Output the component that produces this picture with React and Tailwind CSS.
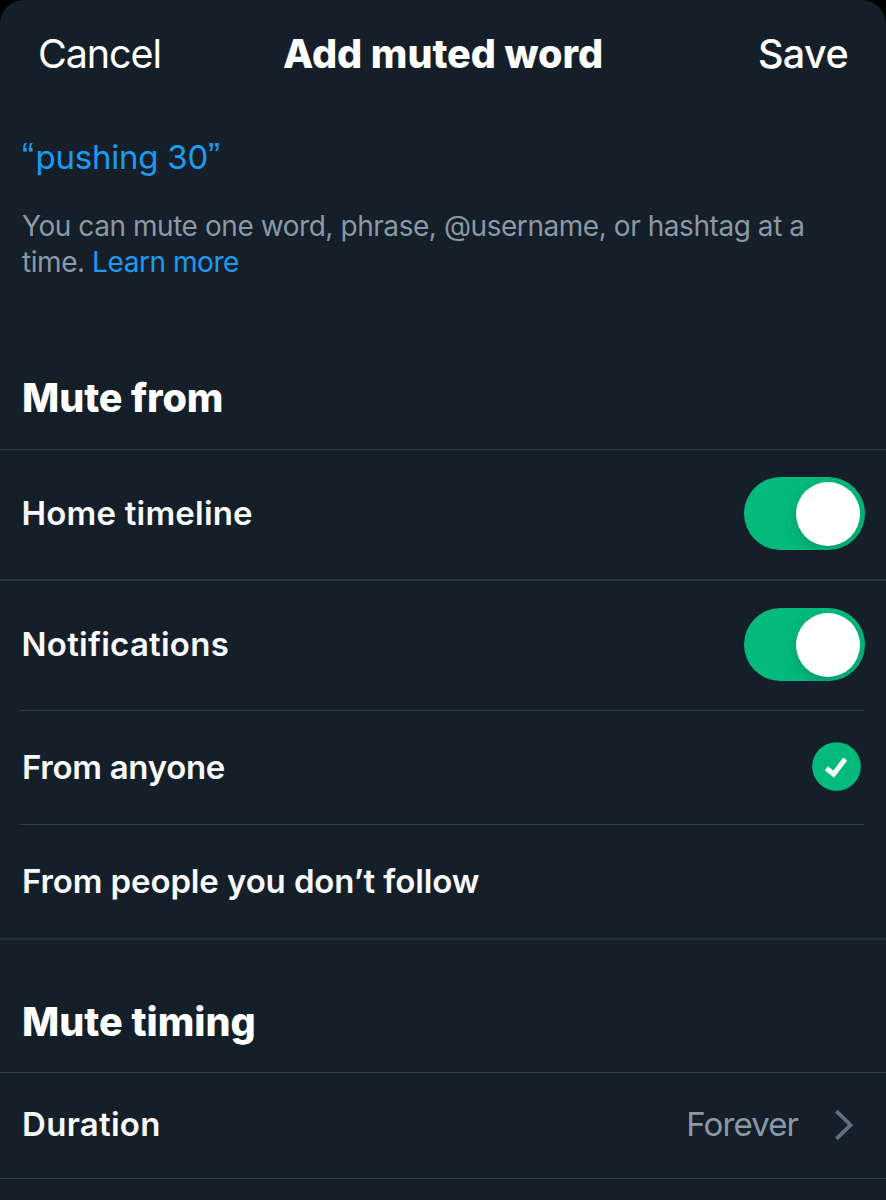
import { useState } from 'react';

const rowText = 'text-[33px] leading-[40px] font-semibold text-[#f7f9fa]';
const quote = "font-['Liberation_Sans',sans-serif] text-[36px] leading-none tracking-[1.6px]";

function Toggle({ checked, onChange, label }) {
  return (
    <button
      type="button"
      role="switch"
      aria-checked={checked}
      aria-label={label}
      onClick={() => onChange(!checked)}
      className={`flex h-[73px] w-[121px] items-center overflow-hidden rounded-full px-[4.5px] ${
        checked ? 'justify-end bg-[#03b97c]' : 'justify-start bg-[#38444d]'
      }`}
    >
      <span className="h-16 w-16 rounded-full bg-white shadow-[0_5px_14px_rgba(0,0,0,0.16)]" />
    </button>
  );
}

function CheckBadge() {
  return (
    <svg viewBox="0 0 49 49" className="h-[49px] w-[49px]" aria-hidden="true">
      <circle cx="24.5" cy="24.5" r="24.3" fill="#03b97c" />
      <path d="M14.4 26.2l7.3 6L33.2 17" fill="none" stroke="#fff" strokeWidth="5" />
    </svg>
  );
}

export default function App() {
  const [home, setHome] = useState(true);
  const [notifications, setNotifications] = useState(true);
  const [source, setSource] = useState('anyone');

  return (
    <div className="h-[1200px] w-[886px] overflow-hidden bg-black font-['Inter',sans-serif]">
      <div className="h-full rounded-t-[24px] bg-[#151f29] text-white">
        {/* Header */}
        <header className="grid h-[109px] grid-cols-[1fr_auto_1fr] items-center px-[38px]">
          <button type="button" className="justify-self-start text-[39.5px] tracking-[-1.1px]">
            Cancel
          </button>
          <h1 className="text-[39.5px] font-extrabold tracking-[-0.05px]">Add muted word</h1>
          <button type="button" className="justify-self-end text-[39.5px] font-medium tracking-[-0.6px]">
            Save
          </button>
        </header>

        {/* Word */}
        <div className="h-[244px] px-[22px] pt-[27px]">
          <p className="h-[42px] text-[33px] leading-[42px] tracking-[-0.25px] text-[#1d9bf0]">
            <span className={quote}>“</span>pushing 30<span className={quote}>”</span>
          </p>
          <p className="mt-[30px] text-[28px] leading-[36px] tracking-[-0.44px] whitespace-nowrap text-[#8b98a5]">
            You can mute one word, phrase, @username, or hashtag at a
            <br />
            time. <a className="text-[#1d9bf0]">Learn more</a>
          </p>
        </div>

        {/* Mute from */}
        <h2 className="flex h-[97px] items-center border-b border-[#2f3b45] px-[22px] pb-[4px] text-[39.5px] font-extrabold tracking-[-0.1px]">
          Mute from
        </h2>
        <div className="flex h-[131px] items-center justify-between border-b-2 border-[#26323c] px-[21.5px] pb-[2px]">
          <span className={`${rowText} pb-[2px] tracking-[0.2px]`}>Home timeline</span>
          <Toggle checked={home} onChange={setHome} label="Home timeline" />
        </div>
        <div className="flex h-[129px] items-center justify-between px-[21.5px] pb-[2px]">
          <span className={`${rowText} pb-[2px] tracking-[0.25px]`}>Notifications</span>
          <Toggle checked={notifications} onChange={setNotifications} label="Notifications" />
        </div>
        <div className="mr-[22px] ml-5 border-y border-[#2f3b45]">
          <button
            type="button"
            onClick={() => setSource('anyone')}
            className="flex h-[113px] w-full items-center justify-between pr-[3px] pb-[2px] pl-[2px]"
          >
            <span className={`${rowText} tracking-[-0.3px]`}>From anyone</span>
            {source === 'anyone' && <CheckBadge />}
          </button>
        </div>
        <button
          type="button"
          onClick={() => setSource('strangers')}
          className="flex h-[115px] w-full items-center justify-between border-b-2 border-[#26323c] px-[22px] pb-[2px]"
        >
          <span className={`${rowText} tracking-[-0.12px]`}>From people you don’t follow</span>
          {source === 'strangers' && <CheckBadge />}
        </button>

        {/* Mute timing */}
        <h2 className="flex h-[133px] items-end border-b border-[#2f3b45] px-[22px] pb-[20px] text-[39.5px] font-extrabold">
          Mute timing
        </h2>
        <div className="flex h-[106px] items-center justify-between border-b border-[#2f3b45] px-[22px] pb-[2px]">
          <span className={`${rowText} pb-[2px] tracking-[0.3px]`}>Duration</span>
          <span className="flex items-center gap-[36px] pr-[10px] text-[33px] tracking-[-0.9px] text-[#8b98a5]">
            Forever
            <svg viewBox="0 0 20 32" className="h-8 w-5" fill="none" stroke="#5f7080" strokeWidth="3.8" aria-hidden="true">
              <path d="M2.4 2.2L16.5 16 2.4 29.8" />
            </svg>
          </span>
        </div>
      </div>
    </div>
  );
}
